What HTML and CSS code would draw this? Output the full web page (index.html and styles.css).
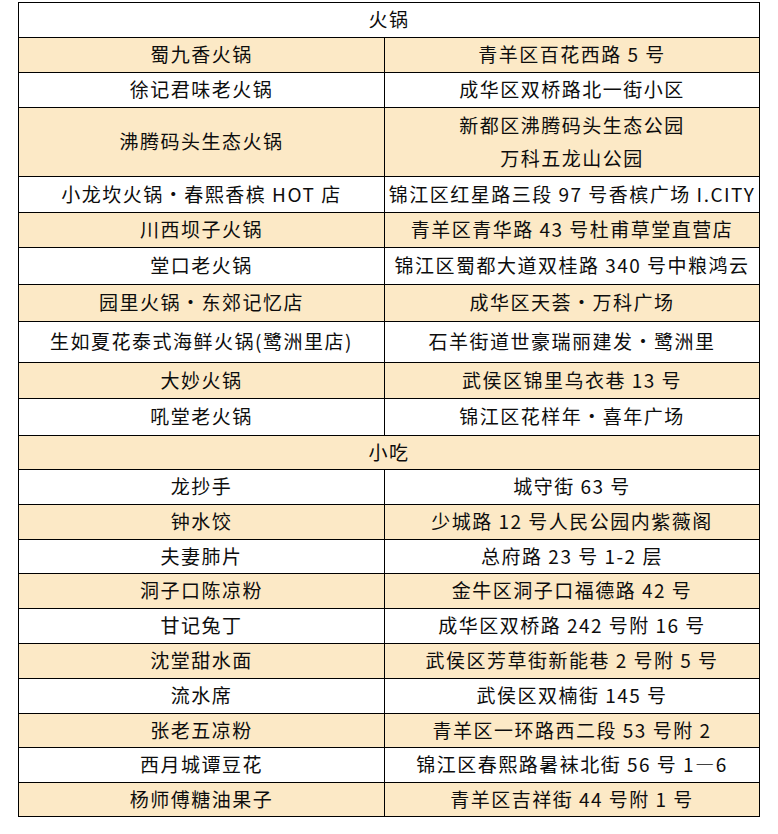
FILE: index.html
```html
<!DOCTYPE html>
<html lang="zh-CN">
<head>
<meta charset="utf-8">
<title>成都美食</title>
<link rel="stylesheet" href="styles.css">
</head>
<body>
<div class="sheet">
  <div class="row title h35"><div class="full">火锅</div></div>
  <div class="row alt h35"><div class="name">蜀九香火锅</div><div class="addr">青羊区百花西路 5 号</div></div>
  <div class="row h35"><div class="name">徐记君味老火锅</div><div class="addr">成华区双桥路北一街小区</div></div>
  <div class="row alt h69"><div class="name">沸腾码头生态火锅</div><div class="addr two"><span>新都区沸腾码头生态公园</span><span>万科五龙山公园</span></div></div>
  <div class="row h36"><div class="name">小龙坎火锅・春熙香槟 HOT 店</div><div class="addr">锦江区红星路三段 97 号香槟广场 I.CITY</div></div>
  <div class="row alt h35"><div class="name">川西坝子火锅</div><div class="addr">青羊区青华路 43 号杜甫草堂直营店</div></div>
  <div class="row h37"><div class="name">堂口老火锅</div><div class="addr">锦江区蜀都大道双桂路 340 号中粮鸿云</div></div>
  <div class="row alt h37"><div class="name">园里火锅・东郊记忆店</div><div class="addr">成华区天荟・万科广场</div></div>
  <div class="row h41"><div class="name">生如夏花泰式海鲜火锅(鹭洲里店)</div><div class="addr">石羊街道世豪瑞丽建发・鹭洲里</div></div>
  <div class="row alt h36"><div class="name">大妙火锅</div><div class="addr">武侯区锦里乌衣巷 13 号</div></div>
  <div class="row h37"><div class="name">吼堂老火锅</div><div class="addr">锦江区花样年・喜年广场</div></div>
  <div class="row alt title h34"><div class="full">小吃</div></div>
  <div class="row h35"><div class="name">龙抄手</div><div class="addr">城守街 63 号</div></div>
  <div class="row alt h35"><div class="name">钟水饺</div><div class="addr">少城路 12 号人民公园内紫薇阁</div></div>
  <div class="row h34"><div class="name">夫妻肺片</div><div class="addr">总府路 23 号 1-2 层</div></div>
  <div class="row alt h35"><div class="name">洞子口陈凉粉</div><div class="addr">金牛区洞子口福德路 42 号</div></div>
  <div class="row h35"><div class="name">甘记兔丁</div><div class="addr">成华区双桥路 242 号附 16 号</div></div>
  <div class="row alt h35"><div class="name">沈堂甜水面</div><div class="addr">武侯区芳草街新能巷 2 号附 5 号</div></div>
  <div class="row h35"><div class="name">流水席</div><div class="addr">武侯区双楠街 145 号</div></div>
  <div class="row alt h34"><div class="name">张老五凉粉</div><div class="addr">青羊区一环路西二段 53 号附 2</div></div>
  <div class="row h35"><div class="name">西月城谭豆花</div><div class="addr">锦江区春熙路暑袜北街 56 号 1—6</div></div>
  <div class="row alt h34"><div class="name">杨师傅糖油果子</div><div class="addr">青羊区吉祥街 44 号附 1 号</div></div>
</div>
</body>
</html>
```

FILE: styles.css
```css
html, body {
  margin: 0;
  padding: 0;
  background: #ffffff;
}

body {
  font-family: "Noto Sans CJK SC", "Noto Sans", sans-serif;
  font-size: 19px;
  color: #0d0d0d;
  letter-spacing: 1.5px;
}

.sheet {
  box-sizing: border-box;
  width: 742px;
  margin: 2px 0 0 18px;
  border: 1px solid #000;
  border-bottom: none;
}

.row {
  box-sizing: border-box;
  display: flex;
  border-bottom: 1px solid #000;
  background: #ffffff;
}

.row.alt {
  background: #fce9c6;
}

.h34 { height: 34px; }
.h35 { height: 35px; }
.h36 { height: 36px; }
.h37 { height: 37px; }
.h41 { height: 41px; }
.h69 { height: 69px; }

.name,
.addr,
.full {
  box-sizing: border-box;
  display: flex;
  align-items: center;
  justify-content: center;
  white-space: nowrap;
  line-height: 1;
  padding-bottom: 3px;
}

.name {
  width: 366px;
  border-right: 1px solid #000;
}

.addr {
  flex: 1;
}

.full {
  flex: 1;
}

.addr.two {
  flex-direction: column;
  gap: 14px;
}
```
